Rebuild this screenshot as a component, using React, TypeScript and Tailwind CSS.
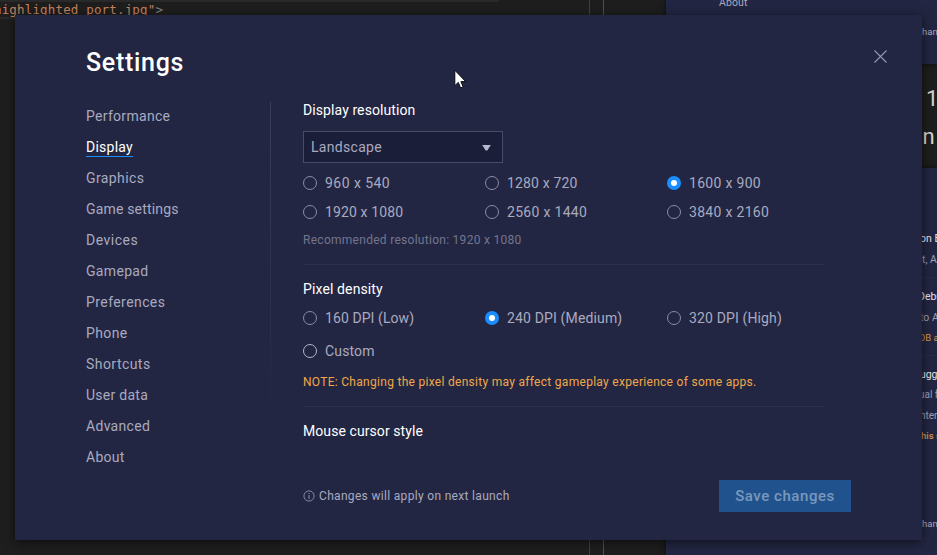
import type { ReactNode } from "react";

const navItems: { label: string; tracking: string }[] = [
  { label: "Performance", tracking: "tracking-[0.3px]" },
  { label: "Display", tracking: "tracking-[0.25px]" },
  { label: "Graphics", tracking: "tracking-[0.4px]" },
  { label: "Game settings", tracking: "tracking-[0.17px]" },
  { label: "Devices", tracking: "tracking-[0.5px]" },
  { label: "Gamepad", tracking: "tracking-[0.32px]" },
  { label: "Preferences", tracking: "tracking-[0.42px]" },
  { label: "Phone", tracking: "tracking-[0.4px]" },
  { label: "Shortcuts", tracking: "tracking-[0.45px]" },
  { label: "User data", tracking: "tracking-[0.27px]" },
  { label: "Advanced", tracking: "tracking-[0.3px]" },
  { label: "About", tracking: "tracking-[0.25px]" },
];

function Radio({ label, checked, bright, tracking = "tracking-[0.3px]" }: { label: string; checked?: boolean; bright?: boolean; tracking?: string }) {
  return (
    <div className="flex items-center gap-2 pb-px">
      {checked ? (
        <span className="flex size-3.5 shrink-0 items-center justify-center rounded-full bg-[#1c8dff]">
          <span className="size-1.5 rounded-full bg-white" />
        </span>
      ) : (
        <span className={`size-3.5 shrink-0 rounded-full border ${bright ? "border-[#b5b6c9]" : "border-[#8b8ca6]"}`} />
      )}
      <span className={`whitespace-nowrap leading-[18px] ${tracking}`}>{label}</span>
    </div>
  );
}

function Heading({ children, tracking }: { children: ReactNode; tracking: string }) {
  return <h2 className={`h-[18px] leading-[18px] text-white ${tracking}`}>{children}</h2>;
}

function Backdrop() {
  return (
    <div className="absolute inset-0 overflow-hidden">
      <div className="absolute left-0 top-0 h-[19px] w-[499px] border-b-2 border-t-2 border-[#292929]" />
      <div className="absolute left-[-6px] top-[1px] whitespace-pre font-['DejaVu_Sans_Mono',monospace] text-[12.5px] leading-[18px] tracking-[0.16px] text-[#c5835f]">
        highlighted_port.jpg"<span className="text-[#808080]">&gt;</span>
      </div>
      <div className="absolute left-[589px] top-0 h-full w-px bg-[#404040]" />
      <div className="absolute left-[603px] top-0 h-full w-px bg-[#505050]" />
      <div className="absolute left-[666px] top-0 h-[64px] w-[271px] bg-[#232642] shadow-[0_0_6px_#0008]" />
      <div className="absolute left-[666px] top-[168px] h-[387px] w-[271px] bg-[#232642] shadow-[0_0_6px_#0008]" />
      <div className="absolute left-[719px] top-[-5px] text-[10.5px] leading-4 tracking-[0.1px] text-[#a9aac0]">About</div>
      <div className="absolute left-[922px] top-[24px] text-[9.5px] leading-4 text-[#a9aac0]">hang</div>
      <div className="absolute left-[926px] top-[85px] text-[22px] leading-7 text-[#d4d4d4]">1</div>
      <div className="absolute left-[910px] top-[123px] text-[22px] leading-7 text-[#d4d4d4]">on</div>
      <div className="absolute left-[920px] top-[231px] whitespace-nowrap text-[10.5px] leading-4 text-[#e4e5ee]">on E</div>
      <div className="absolute left-[922px] top-[252px] whitespace-nowrap text-[10.5px] leading-4 text-[#9fa0b7]">t, An</div>
      <div className="absolute left-[900px] top-[277px] h-px w-10 bg-[#292c48]" />
      <div className="absolute left-[918px] top-[289px] whitespace-nowrap text-[10.5px] leading-4 text-[#e4e5ee]">Debug</div>
      <div className="absolute left-[920px] top-[310px] whitespace-nowrap text-[10.5px] leading-4 text-[#9fa0b7]">to An</div>
      <div className="absolute left-[919px] top-[330px] whitespace-nowrap text-[9.5px] leading-4 text-[#d59a49]">DB ac</div>
      <div className="absolute left-[900px] top-[355px] h-px w-10 bg-[#292c48]" />
      <div className="absolute left-[914px] top-[367px] whitespace-nowrap text-[10.5px] leading-4 text-[#e4e5ee]">bugg</div>
      <div className="absolute left-[919px] top-[387px] whitespace-nowrap text-[10px] leading-4 text-[#9fa0b7]">ual fo</div>
      <div className="absolute left-[920px] top-[408px] whitespace-nowrap text-[10px] leading-4 text-[#9fa0b7]">nter</div>
      <div className="absolute left-[921px] top-[428px] whitespace-nowrap text-[9.5px] leading-4 font-medium text-[#d59a49]">his se</div>
      <div className="absolute left-[922px] top-[516px] text-[9.5px] leading-4 text-[#a9aac0]">hang</div>
    </div>
  );
}

export default function App() {
  return (
    <div className="relative h-[555px] w-[937px] overflow-hidden bg-[#1e1e1e] font-[Roboto,sans-serif]">
      <Backdrop />
      <main className="absolute left-[15px] top-[15px] flex h-[525px] w-[907px] flex-col bg-[#232642] text-sm text-[#a9aac0] shadow-[0_2px_10px_#0009]">
        <header className="flex h-[86px] shrink-0 items-start justify-between pl-[71px] pr-[34px]">
          <h1 className="mt-8 text-[25px] leading-8 font-medium tracking-[0.7px] text-white">Settings</h1>
          <svg className="mt-[34px]" width="15" height="15" viewBox="0 0 15 15" fill="none" stroke="#9697ae" strokeWidth="1.1">
            <path d="M1.5 1.5l12 12M13.5 1.5l-12 12" />
          </svg>
        </header>
        <div className="flex h-[372px] shrink-0 pl-[71px]">
          <nav className="w-[184px]">
            {navItems.map((item) => (
              <div key={item.label} className="flex h-[31px] items-start pt-1.5">
                <span
                  className={`leading-[18px] ${item.tracking} ${
                    item.label === "Display" ? "h-[19px] border-b border-b-[#1c8dff] text-white" : ""
                  }`}
                >
                  {item.label}
                </span>
              </div>
            ))}
          </nav>
          <div className="mt-px h-[330px] w-px bg-gradient-to-b from-[#3b3e59] to-[#232642]" />
          <section className="ml-8 w-[521px]">
            <Heading tracking="tracking-[0.09px]">Display resolution</Heading>
            <div className="mt-3 flex h-8 w-[200px] items-center justify-between border border-[#484a66] bg-[#1b1e38] pl-[7px] pr-[11px]">
              <span className="tracking-[0.3px]">Landscape</span>
              <svg width="9" height="7" viewBox="0 0 9 7" fill="#b6b8ce">
                <path d="M.2 1h8.6L5.3 6.5H3.7z" />
              </svg>
            </div>
            <div className="mt-1.5 grid grid-cols-[182px_182px_157px] auto-rows-[29px]">
              <Radio label="960 x 540" tracking="tracking-[0.45px]" />
              <Radio label="1280 x 720" tracking="tracking-[0.15px]" />
              <Radio label="1600 x 900" checked />
              <Radio label="1920 x 1080" tracking="tracking-[0.12px]" />
              <Radio label="2560 x 1440" />
              <Radio label="3840 x 2160" />
            </div>
            <p className="mt-[5px] h-4 text-xs leading-4 tracking-[0.28px] text-[#73758f]">Recommended resolution: 1920 x 1080</p>
            <hr className="mt-4 border-[#2d304c]" />
            <div className="mt-[15px]">
              <Heading tracking="tracking-[0.12px]">Pixel density</Heading>
            </div>
            <div className="mt-1.5 grid h-[29px] grid-cols-[182px_182px_157px]">
              <Radio label="160 DPI (Low)" tracking="tracking-[0.08px]" />
              <Radio label="240 DPI (Medium)" checked tracking="tracking-[0.15px]" />
              <Radio label="320 DPI (High)" tracking="tracking-[0.14px]" />
            </div>
            <div className="mt-1 flex h-[29px]">
              <Radio label="Custom" bright tracking="tracking-[0.15px]" />
            </div>
            <p className="mt-2 h-4 whitespace-nowrap text-xs leading-4 tracking-[0.29px] text-[#f0a84b]">
              NOTE: Changing the pixel density may affect gameplay experience of some apps.
            </p>
            <hr className="mt-4 border-[#2d304c]" />
            <div className="mt-[15px]">
              <Heading tracking="tracking-[0.08px]">Mouse cursor style</Heading>
            </div>
          </section>
        </div>
        <footer className="mt-[7px] flex h-8 items-center justify-between pl-[288px] pr-[71px]">
          <div className="flex items-center gap-1 text-xs">
            <svg width="12" height="12" viewBox="0 0 12 12" fill="none" stroke="#9293aa">
              <circle cx="6" cy="6" r="5.1" strokeWidth=".9" />
              <path d="M6 3v1M6 5v4" />
            </svg>
            <span className="tracking-[0.32px]">Changes will apply on next launch</span>
          </div>
          <button className="h-8 w-[132px] bg-[#20538e] pt-0.5 text-[15px] font-medium tracking-[0.55px] text-[#7a98bb]">Save changes</button>
        </footer>
      </main>
      <svg className="absolute left-[454px] top-[69px]" width="13" height="21" viewBox="0 0 13 21" fill="white" stroke="#080810">
        <path d="M.8 1.2v15.5l3.5-3.3 2.3 5.5 2.6-1-2.3-5.3h4.8z" />
      </svg>
    </div>
  );
}
